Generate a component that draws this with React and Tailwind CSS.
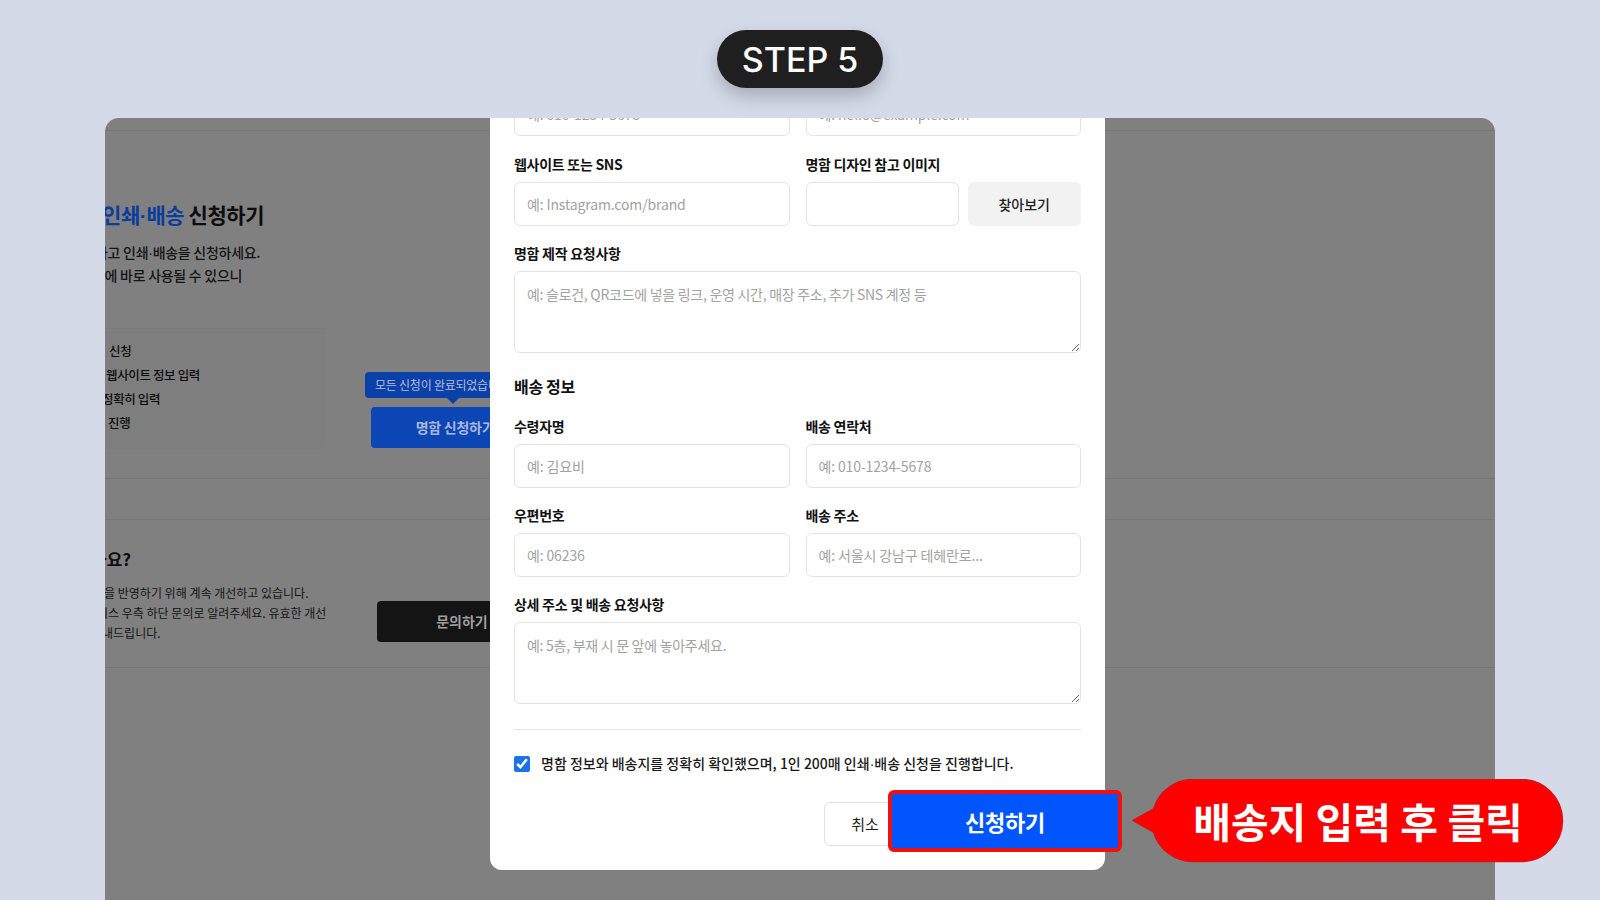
import React from "react";

function Dot() {
  return <span className="font-['Liberation_Sans',sans-serif]">·</span>;
}

function Field({ label, placeholder, className = "" }) {
  return (
    <div className={"flex flex-col " + className}>
      <div className="text-[14px] leading-5 font-semibold text-[#111] tracking-[-0.02em]">{label}</div>
      <input
        readOnly
        placeholder={placeholder}
        className="mt-2 h-11 w-full rounded-md border border-[#e3e3e3] bg-white px-3 text-[14px] tracking-[-0.01em] text-[#111] placeholder:text-[#a2a2a2] outline-none"
      />
    </div>
  );
}

function AreaField({ label, placeholder, className = "" }) {
  return (
    <div className={"flex flex-col " + className}>
      <div className="text-[14px] leading-5 font-semibold text-[#111] tracking-[-0.02em]">{label}</div>
      <textarea
        readOnly
        placeholder={placeholder}
        className="mt-2 h-[82px] w-full resize-y rounded-md border border-[#e3e3e3] bg-white px-3 py-3 text-[14px] leading-5 tracking-[-0.02em] placeholder:text-[#a2a2a2] outline-none"
      />
    </div>
  );
}

function UnderlyingPage() {
  return (
    <div className="flex flex-col text-[#0d0d0d]">
      <div className="h-[13px] border-b border-[#777777]" />
      <h2 className="mt-[69px] -ml-[3px] text-[21px] leading-[28px] font-bold tracking-[-0.02em] whitespace-nowrap">
        <span className="text-[#0c3c9c]">인쇄<Dot />배송</span> 신청하기
      </h2>
      <div className="mt-[11px] text-[14px] leading-[22px] font-medium tracking-[-0.02em] text-[#141414] whitespace-nowrap">
        <div className="-ml-[10px]">하고 인쇄<Dot />배송을 신청하세요.</div>
        <div className="-ml-[13px]">함에 바로 사용될 수 있으니</div>
      </div>

      <div className="mt-[42px] flex items-start">
        <div className="w-[240px] -ml-[20px] pl-[20px] rounded-br-md bg-[#7e7e7e] pt-[10px] pb-[14px] text-[12.5px] leading-[24px] font-medium tracking-[-0.03em] whitespace-nowrap border-t border-[#7b7b7b]">
          <div className="pl-[4px]">신청</div>
          <div className="pl-[1px]">웹사이트 정보 입력</div>
          <div className="-ml-[3px]">정확히 입력</div>
          <div className="pl-[3px]">진행</div>
        </div>
        <div className="ml-[40px] mt-[44px] flex flex-col items-start">
          <div className="relative h-[26px] w-[186px] rounded-[4px] bg-[#0b40a6] px-[10px] text-[12px] leading-[26px] text-[#b3bfdf] whitespace-nowrap tracking-[-0.02em]">
            모든 신청이 완료되었습니다
            <div className="absolute left-[82px] top-[26px] h-0 w-0 border-x-[6px] border-t-[6px] border-x-transparent border-t-[#0b40a6]" />
          </div>
          <div className="ml-[6px] mt-[9px] flex h-[41px] w-[176px] items-center justify-center rounded-[4px] bg-[#0b46b4] pr-[8px] text-[14px] font-bold text-[#a9b7de] tracking-[-0.02em]">
            명함 신청하기
          </div>
        </div>
      </div>

      <div className="mt-[29px] h-px bg-[#767676]" />
      <div className="mt-[40px] h-px bg-[#767676]" />

      <div className="mt-[27px] flex items-start">
        <div className="w-[272px] whitespace-nowrap">
          <div className="-ml-[14px] text-[17px] leading-[24px] font-bold">나요?</div>
          <div className="mt-[12px] text-[12px] leading-[20px] text-[#141414]">
            <div className="-ml-[12px]">견을 반영하기 위해 계속 개선하고 있습니다.</div>
            <div className="-ml-[19px]">서비스 우측 하단 문의로 알려주세요. 유효한 개선</div>
            <div className="-ml-[14px]">안내드립니다.</div>
          </div>
        </div>
        <div className="mt-[54px] flex h-[41px] w-[170px] items-center justify-center rounded-[4px] bg-[#141414] text-[14px] font-bold text-[#9f9f9f]">
          문의하기
        </div>
      </div>
      <div className="mt-[24px] h-px bg-[#767676]" />
    </div>
  );
}

function Modal() {
  return (
    <div className="absolute left-[385px] bottom-[30px] w-[615px] rounded-xl bg-white px-6 pb-6">
      <div className="grid grid-cols-2 gap-x-4">
        <Field label="브랜드명" placeholder="예: 요비 스튜디오" />
        <Field label="직함" placeholder="예: 대표" />
      </div>
      <div className="mt-[17px] grid grid-cols-2 gap-x-4">
        <Field label="연락처" placeholder="예: 010-1234-5678" />
        <Field label="이메일" placeholder="예: hello@example.com" />
      </div>
      <div className="mt-[18px] grid grid-cols-2 gap-x-4">
        <Field label="웹사이트 또는 SNS" placeholder="예: Instagram.com/brand" />
        <div className="flex flex-col">
          <div className="text-[14px] leading-5 font-semibold text-[#111] tracking-[-0.02em]">명함 디자인 참고 이미지</div>
          <div className="mt-2 flex gap-[9px]">
            <div className="h-11 w-[153px] rounded-md border border-[#e3e3e3] bg-white" />
            <button className="h-11 flex-1 rounded-md bg-[#f2f2f2] text-[14px] font-medium text-[#222]">찾아보기</button>
          </div>
        </div>
      </div>
      <AreaField
        className="mt-[17px]"
        label="명함 제작 요청사항"
        placeholder="예: 슬로건, QR코드에 넣을 링크, 운영 시간, 매장 주소, 추가 SNS 계정 등"
      />
      <div className="mt-[21px] text-[16px] leading-6 font-bold text-[#111] tracking-[-0.02em]">배송 정보</div>
      <div className="mt-[18px] grid grid-cols-2 gap-x-4">
        <Field label="수령자명" placeholder="예: 김요비" />
        <Field label="배송 연락처" placeholder="예: 010-1234-5678" />
      </div>
      <div className="mt-[17px] grid grid-cols-2 gap-x-4">
        <Field label="우편번호" placeholder="예: 06236" />
        <Field label="배송 주소" placeholder="예: 서울시 강남구 테헤란로..." />
      </div>
      <AreaField
        className="mt-[17px]"
        label="상세 주소 및 배송 요청사항"
        placeholder="예: 5층, 부재 시 문 앞에 놓아주세요."
      />
      <div className="mt-[25px] h-px bg-[#e6e6e6]" />
      <label className="mt-[24px] flex h-5 items-center gap-[11px]">
        <input type="checkbox" defaultChecked className="h-4 w-4 accent-[#1a73e8]" />
        <span className="text-[14px] font-medium text-[#1a1a1a] whitespace-nowrap">
          명함 정보와 배송지를 정확히 확인했으며, 1인 200매 인쇄<Dot />배송 신청을 진행합니다.
        </span>
      </label>
      <div className="mt-[28px] flex items-center justify-end">
        <button className="h-11 w-[82px] rounded-md border border-[#e0e0e0] bg-white text-[15px] text-[#222]">취소</button>
        <button className="relative z-10 -mb-[6px] -ml-[18px] -mr-[41px] -mt-[12px] h-[62px] w-[234px] rounded-[6px] border-4 border-[#ee1111] bg-[#0055ff] text-[22px] font-bold text-white tracking-[-0.01em]">
          신청하기
        </button>
      </div>
    </div>
  );
}

function Callout() {
  return (
    <div className="absolute left-[1132px] top-[779px] h-[84px] w-[432px]">
      <svg className="absolute inset-0" width="432" height="84" viewBox="0 0 432 84">
        <path
          d="M1 41.5 L21.6 30 A41 41 0 0 1 61.5 0.5 H389.5 A41 41 0 0 1 389.5 82.5 H61.5 A41 41 0 0 1 21.6 53 Z"
          fill="#ff0000"
          stroke="#dd1111"
          strokeWidth="1.5"
        />
      </svg>
      <div className="relative flex h-full items-center justify-center pl-[20px] text-[41px] font-bold text-white whitespace-nowrap">
        배송지 입력 후 클릭
      </div>
    </div>
  );
}

export default function App() {
  return (
    <div className="relative flex h-[900px] w-[1600px] flex-col overflow-hidden bg-[#d5dae8] font-['Noto_Sans_CJK_KR','Noto_Sans',sans-serif]">
      <div className="flex h-[118px] shrink-0 justify-center pt-[30px]">
        <div className="flex h-[58px] w-[166px] items-center justify-center rounded-full bg-[#1f1f1f] font-['Inter',sans-serif] text-[34px] font-medium text-white shadow-[0_8px_18px_rgba(0,0,0,0.22)]">
          STEP 5
        </div>
      </div>
      <div className="relative ml-[105px] w-[1390px] flex-1 overflow-hidden rounded-t-[14px] bg-[#808080]">
        <UnderlyingPage />
        <Modal />
      </div>
      <Callout />
    </div>
  );
}
